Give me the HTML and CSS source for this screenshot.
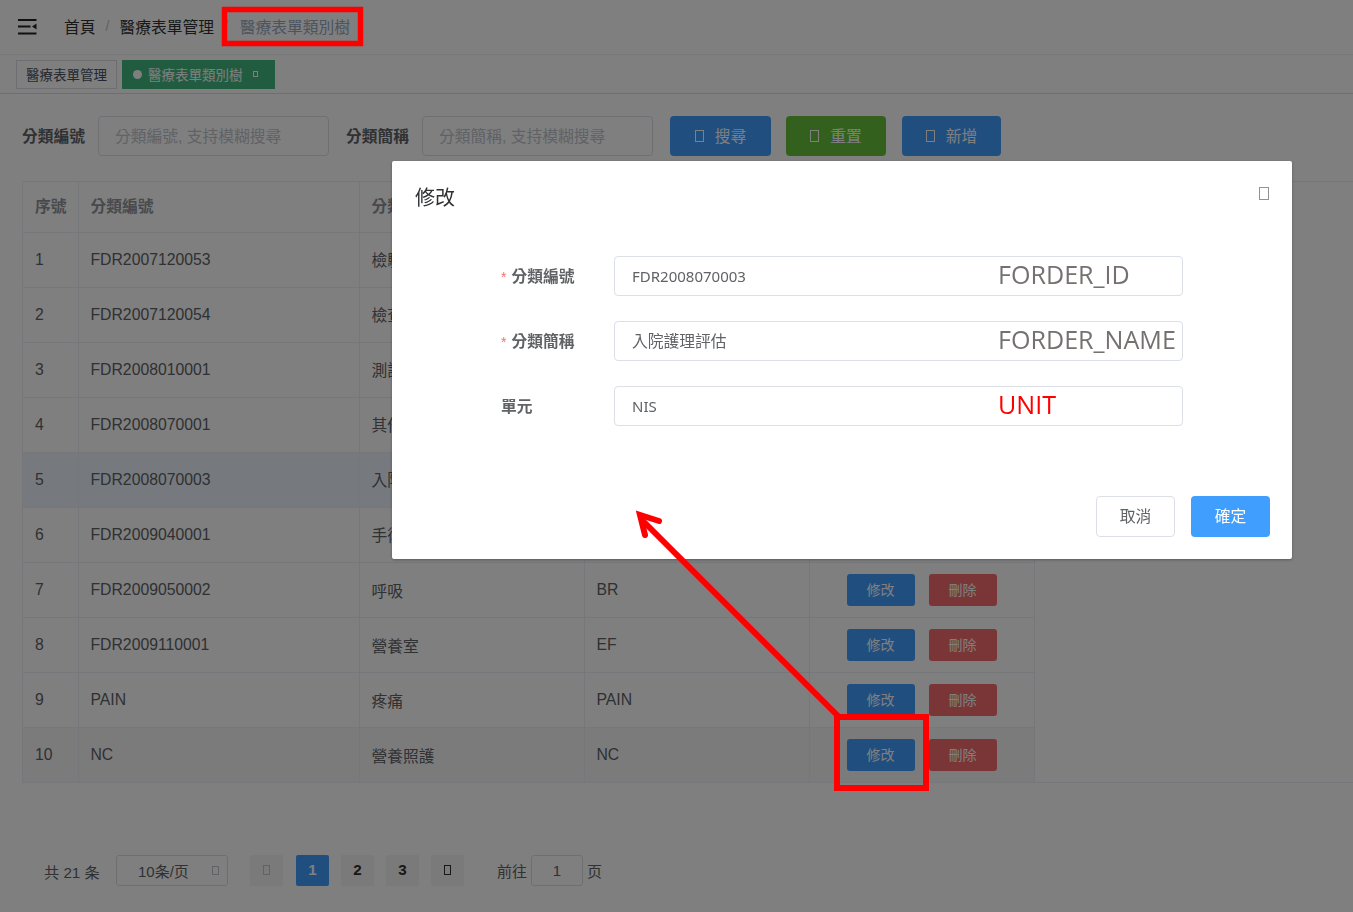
FILE: index.html
```html
<!DOCTYPE html>
<html lang="zh-Hant">
<head>
<meta charset="UTF-8">
<meta name="viewport" content="width=device-width, initial-scale=1.0">
<title>醫療表單類別樹</title>
<link rel="stylesheet" href="styles.css">
</head>
<body>

<div class="navbar">
    <svg class="hamburger" width="19" height="17" viewBox="0 0 19 17">
        <path d="M0 1h18.500M0 7.500h12.500M0 14.500h18.500" stroke="#222" stroke-width="2" fill="none"/>
        <path d="M18.500 4.500v6l-4.500-3z" fill="#222"/>
    </svg>
    <div class="breadcrumb">
        <span>首頁</span><span class="sep">/</span>
        <span>醫療表單管理</span><span class="sep">/</span>
        <span class="current">醫療表單類別樹</span>
    </div>
</div>

<div class="tags">
    <span class="tag">醫療表單管理</span>
    <span class="tag active"><i class="dot"></i>醫療表單類別樹<i class="tofu tag-close"></i></span>
</div>

<div class="main">
    <form class="filter">
        <label>分類編號</label>
        <input type="text" placeholder="分類編號, 支持模糊搜尋">
        <label>分類簡稱</label>
        <input type="text" placeholder="分類簡稱, 支持模糊搜尋">
        <button type="button" class="btn blue first"><i class="tofu"></i>搜尋</button>
        <button type="button" class="btn green"><i class="tofu"></i>重置</button>
        <button type="button" class="btn blue last"><i class="tofu"></i>新增</button>
    </form>

    <div class="table-wrap">
        <table>
            <colgroup>
                <col class="c-no"><col class="c-id"><col class="c-name"><col class="c-unit"><col class="c-op">
            </colgroup>
            <thead>
                <tr><th>序號</th><th>分類編號</th><th>分類簡稱</th><th>單元</th><th>操作</th></tr>
            </thead>
            <tbody>
                <tr><td>1</td><td>FDR2007120053</td><td>檢驗</td><td>LAB</td><td class="ops"><span class="mini blue">修改</span><span class="mini red">刪除</span></td></tr>
                <tr><td>2</td><td>FDR2007120054</td><td>檢查</td><td>EXAM</td><td class="ops"><span class="mini blue">修改</span><span class="mini red">刪除</span></td></tr>
                <tr><td>3</td><td>FDR2008010001</td><td>測試</td><td>TEST</td><td class="ops"><span class="mini blue">修改</span><span class="mini red">刪除</span></td></tr>
                <tr><td>4</td><td>FDR2008070001</td><td>其他</td><td>OTH</td><td class="ops"><span class="mini blue">修改</span><span class="mini red">刪除</span></td></tr>
                <tr class="selected"><td>5</td><td>FDR2008070003</td><td>入院護理評估</td><td>NIS</td><td class="ops"><span class="mini blue">修改</span><span class="mini red">刪除</span></td></tr>
                <tr><td>6</td><td>FDR2009040001</td><td>手術</td><td>OP</td><td class="ops"><span class="mini blue">修改</span><span class="mini red">刪除</span></td></tr>
                <tr><td>7</td><td>FDR2009050002</td><td>呼吸</td><td>BR</td><td class="ops"><span class="mini blue">修改</span><span class="mini red">刪除</span></td></tr>
                <tr><td>8</td><td>FDR2009110001</td><td>營養室</td><td>EF</td><td class="ops"><span class="mini blue">修改</span><span class="mini red">刪除</span></td></tr>
                <tr><td>9</td><td>PAIN</td><td>疼痛</td><td>PAIN</td><td class="ops"><span class="mini blue">修改</span><span class="mini red">刪除</span></td></tr>
                <tr class="hover"><td>10</td><td>NC</td><td>營養照護</td><td>NC</td><td class="ops"><span class="mini blue">修改</span><span class="mini red">刪除</span></td></tr>
            </tbody>
        </table>
    </div>

    <div class="pagination">
        <span class="total">共 21 条</span>
        <span class="size">10条/页<i class="tofu"></i></span>
        <span class="page prev"><i class="tofu"></i></span>
        <span class="page on">1</span>
        <span class="page">2</span>
        <span class="page">3</span>
        <span class="page"><i class="tofu"></i></span>
        <span class="jump">前往</span>
        <span class="jump-box">1</span>
        <span class="jump-end">页</span>
    </div>
</div>

<div class="overlay">
    <div class="dialog">
        <div class="dialog-head">
            <span class="dialog-title">修改</span>
            <i class="tofu dialog-close"></i>
        </div>
        <div class="dialog-form">
            <div class="row">
                <label><em>*</em>分類編號</label>
                <div class="field">
                    <span class="value">FDR2008070003</span>
                    <span class="note">FORDER_ID</span>
                </div>
            </div>
            <div class="row">
                <label><em>*</em>分類簡稱</label>
                <div class="field">
                    <span class="value cjk">入院護理評估</span>
                    <span class="note">FORDER_NAME</span>
                </div>
            </div>
            <div class="row">
                <label>單元</label>
                <div class="field">
                    <span class="value">NIS</span>
                    <span class="note red-note">UNIT</span>
                </div>
            </div>
        </div>
        <div class="dialog-foot">
            <button type="button" class="cancel">取消</button>
            <button type="button" class="ok">確定</button>
        </div>
    </div>
</div>

<svg class="marks" width="1353" height="912" viewBox="0 0 1353 912">
    <rect x="224.500" y="9.500" width="136" height="34" fill="none" stroke="#f00" stroke-width="5.500"/>
    <rect x="837" y="717" width="89" height="71" fill="none" stroke="#f00" stroke-width="6"/>
    <path d="M838 716L642 520" stroke="#f00" stroke-width="6" fill="none"/>
    <path d="M659 521L640 515L645 535" stroke="#f00" stroke-width="6" stroke-linecap="round" stroke-linejoin="miter" fill="none"/>
</svg>

</body>
</html>
```

FILE: styles.css
```css
* {
    box-sizing: border-box;
}
body {
    font-family: "Liberation Sans", "Noto Sans CJK TC", sans-serif;
    font-size: 15.750px;
    margin: 0;
    height: 912px;
    overflow: hidden;
    color: #606266;
    background: #fff;
}
i {
    font-style: normal;
}
.tofu {
    display: inline-block;
    width: 9px;
    height: 12px;
    border: 1.500px solid currentColor;
}

/* top bar */
.navbar {
    display: flex;
    align-items: center;
    height: 55px;
    padding-left: 18px;
    border-bottom: 1px solid #f0f0f0;
}
.breadcrumb {
    display: flex;
    align-items: center;
    margin-left: 27px;
    padding-bottom: 2px;
    color: #303133;
}
.sep {
    margin: 0 10px;
    color: #c0c4cc;
    font-size: 14px;
}
.current {
    margin-left: 2px;
    color: #97a8be;
}
.tags {
    display: flex;
    align-items: center;
    gap: 5px;
    height: 39px;
    padding-left: 16px;
    border-bottom: 1px solid #d8dce5;
    font-size: 13.500px;
}
.tag {
    display: flex;
    align-items: center;
    height: 29px;
    padding: 0 9px;
    border: 1px solid #d8dce5;
    color: #495060;
}
.tag.active {
    background: #42b983;
    border-color: #42b983;
    color: #fff;
    padding: 0 16px 0 10px;
}
.dot {
    width: 9px;
    height: 9px;
    margin-right: 6px;
    border-radius: 50%;
    background: #fff;
}
.tag-close {
    width: 5px;
    height: 6px;
    margin-left: 10px;
    border-width: 1px;
}

/* search row */
.main {
    padding-left: 22px;
}
.filter {
    display: flex;
    align-items: center;
    height: 40px;
    margin-top: 22px;
}
.filter label {
    width: 64px;
    margin-right: 12px;
    padding-bottom: 1px;
    font-weight: bold;
    white-space: nowrap;
}
.filter input {
    width: 231px;
    height: 40px;
    margin-right: 17px;
    padding: 1px 16px 0;
    font: inherit;
    border: 1px solid #dcdfe6;
    border-radius: 4px;
}
.filter input::placeholder {
    color: #c0c4cc;
}
.btn {
    display: flex;
    align-items: center;
    justify-content: center;
    width: 100px;
    height: 40px;
    margin-right: 16px;
    padding: 0 0 1px;
    font: inherit;
    color: #fff;
    border: none;
    border-radius: 4px;
}
.btn.first {
    width: 101px;
    margin-right: 15px;
}
.btn.last {
    width: 99px;
}
.btn .tofu {
    margin-right: 11px;
}
.blue {
    background: #409eff;
}
.green {
    background: #67c23a;
}
.red {
    background: #f56c6c;
}

/* table */
.table-wrap {
    margin-top: 25px;
    border-top: 1px solid #ebeef5;
    border-bottom: 1px solid #ebeef5;
    border-left: 1px solid #ebeef5;
}
table {
    width: 1011px;
    table-layout: fixed;
    border-collapse: collapse;
}
.c-no { width: 55px; }
.c-id { width: 281px; }
.c-name { width: 225px; }
.c-unit { width: 225px; }
.c-op { width: 225px; }
th, td {
    height: 55px;
    padding: 0 11px 0 12px;
    text-align: left;
    white-space: nowrap;
    border-right: 1px solid #ebeef5;
    border-bottom: 1px solid #ebeef5;
}
th {
    height: 50px;
    padding-bottom: 3px;
    color: #909399;
}
tbody tr:nth-child(n+7) td {
    padding-top: 1px;
}
tbody tr:last-child td {
    border-bottom: none;
}
tr.selected td {
    background: #ecf5ff;
}
tr.hover td {
    background: #f7f7f8;
}
td.ops {
    padding-left: 37px;
}
tbody tr td.ops {
    padding-top: 0;
}
.mini {
    display: inline-block;
    width: 68px;
    height: 32px;
    margin-right: 14px;
    line-height: 32px;
    text-align: center;
    font-size: 14px;
    color: #fff;
    border-radius: 3px;
    vertical-align: middle;
}

/* pager */
.pagination {
    display: flex;
    align-items: center;
    height: 31px;
    margin-top: 72px;
    padding-left: 22px;
    font-size: 15.200px;
    color: #606266;
}
.total {
    width: 72px;
}
.size {
    display: flex;
    align-items: center;
    width: 112px;
    height: 31px;
    padding-left: 21px;
    margin-right: 22px;
    font-size: 15px;
    border: 1px solid #dcdfe6;
    border-radius: 3px;
}
.size .tofu {
    width: 7px;
    height: 9px;
    margin-left: 23px;
    border-width: 1px;
    color: #c0c4cc;
}
.page {
    display: flex;
    align-items: center;
    justify-content: center;
    width: 33px;
    height: 31px;
    margin-right: 12px;
    padding-bottom: 2px;
    font-weight: bold;
    color: #303133;
    background: #f4f4f5;
    border-radius: 2px;
}
.page .tofu {
    width: 7px;
    height: 10px;
}
.page.prev {
    margin-right: 13px;
    color: #c0c4cc;
}
.page.on {
    background: #409eff;
    color: #fff;
}
.jump {
    margin-left: 21px;
    font-size: 15px;
}
.jump-box {
    width: 52px;
    height: 31px;
    margin: 0 4px;
    line-height: 29px;
    text-align: center;
    font-size: 15px;
    border: 1px solid #dcdfe6;
    border-radius: 3px;
}
.jump-end {
    font-size: 15px;
}

/* modal */
.overlay {
    position: fixed;
    top: 0;
    left: 0;
    width: 100%;
    height: 100%;
    padding: 161px 0 0 392px;
    background: rgba(0, 0, 0, 0.5);
}
.dialog {
    display: flex;
    flex-direction: column;
    width: 900px;
    height: 398px;
    background: #fff;
    border-radius: 2px;
    box-shadow: 0 1px 3px rgba(0, 0, 0, 0.3);
}
.dialog-head {
    display: flex;
    justify-content: space-between;
    padding: 21px 23px 0;
    height: 95px;
}
.dialog-title {
    font-size: 20px;
    color: #303133;
}
.dialog-close {
    width: 10px;
    height: 13px;
    margin-top: 5px;
    color: #909399;
}
.dialog-form {
    flex: 1;
    padding-left: 109px;
}
.row {
    display: flex;
    align-items: center;
    margin-bottom: 25px;
}
.row label {
    width: 113px;
    padding-bottom: 1px;
    font-weight: bold;
    white-space: nowrap;
    color: #606266;
}
.row em {
    font-style: normal;
    font-weight: normal;
    color: #f56c6c;
    font-size: 14px;
    margin-right: 5px;
}
.field {
    position: relative;
    display: flex;
    align-items: center;
    width: 569px;
    height: 40px;
    padding: 0 0 1px 17px;
    border: 1px solid #dcdfe6;
    border-radius: 4px;
    font-family: "Noto Sans", "Noto Sans CJK TC", sans-serif;
    font-size: 15px;
}
.value.cjk {
    font-size: 15.750px;
}
.note {
    position: absolute;
    left: 383px;
    top: 0;
    font-family: "Open Sans", sans-serif;
    font-size: 25.100px;
    color: #767171;
}
.red-note {
    color: #f00;
}
.dialog-foot {
    display: flex;
    justify-content: flex-end;
    gap: 16px;
    padding: 0 22px 22px;
}
.dialog-foot button {
    width: 79px;
    height: 41px;
    padding: 0 0 2px;
    font: inherit;
    border-radius: 4px;
}
.cancel {
    background: #fff;
    border: 1px solid #dcdfe6;
    color: #606266;
}
.ok {
    background: #409eff;
    border: none;
    color: #fff;
}

/* red annotations drawn over the shot */
.marks {
    position: absolute;
    top: 0;
    left: 0;
    pointer-events: none;
}
```
